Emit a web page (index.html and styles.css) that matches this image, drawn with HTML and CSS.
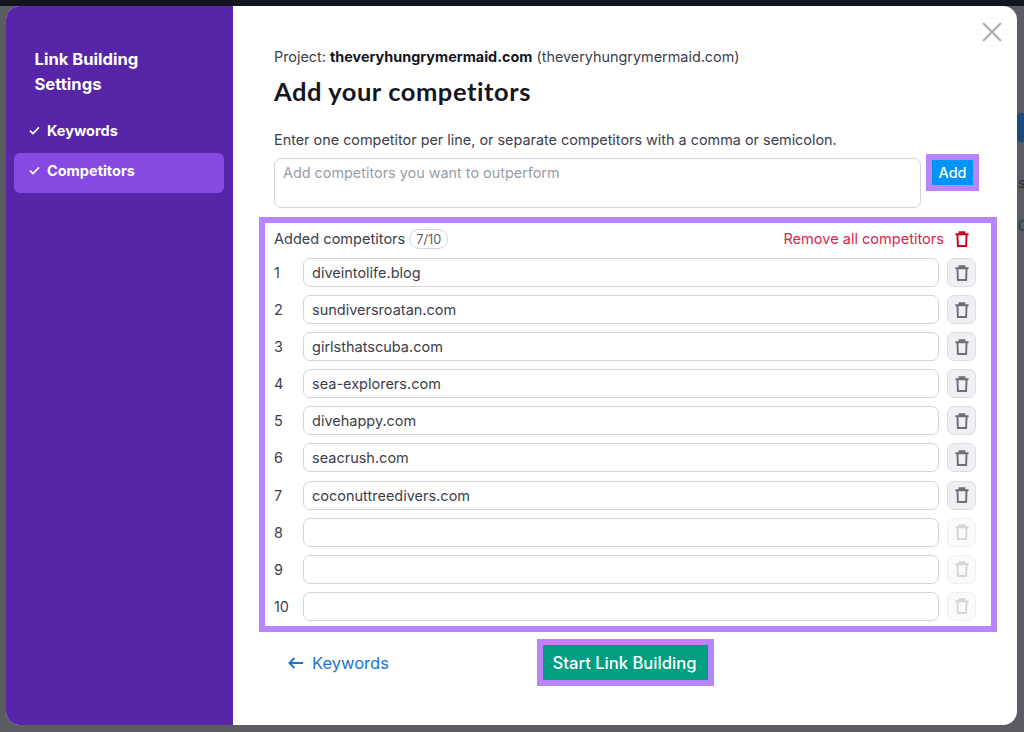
FILE: index.html
```html
<!DOCTYPE html>
<html lang="en">
<head>
<meta charset="utf-8">
<title>Link Building Settings</title>
<link rel="stylesheet" href="styles.css">
</head>
<body>
<svg class="defs" width="0" height="0" aria-hidden="true">
  <symbol id="trash" viewBox="0 0 16 18">
    <path d="M0.5 3.5h15M5.2 3.5V1.2h5.6v2.3M2.8 3.5l.5 13.4h9.4l.5-13.4" fill="none" stroke="currentColor" stroke-width="2.2"/>
  </symbol>
</svg>
<div class="topbar"></div>
<div class="bg-tab"></div>
<div class="bg-s">s</div>
<div class="bg-o">O</div>
<div class="modal">
  <aside class="sidebar">
    <h2 class="side-title">Link Building Settings</h2>
    <div class="step"><svg class="check" viewBox="0 0 12 10"><path d="M1 5.2 4.3 8.5 11 1.5" fill="none" stroke="currentColor" stroke-width="1.8"/></svg>Keywords</div>
    <div class="step step-active"><svg class="check" viewBox="0 0 12 10"><path d="M1 5.2 4.3 8.5 11 1.5" fill="none" stroke="currentColor" stroke-width="1.8"/></svg>Competitors</div>
  </aside>
  <main class="main">
    <svg class="close" viewBox="0 0 20 20"><path d="M1 1 19 19M19 1 1 19" fill="none" stroke="currentColor" stroke-width="2"/></svg>
    <p class="project">Project: <b>theveryhungrymermaid.com</b> (theveryhungrymermaid.com)</p>
    <h1 class="title">Add your competitors</h1>
    <p class="hint">Enter one competitor per line, or separate competitors with a comma or semicolon.</p>
    <div class="add-row">
      <div class="textarea">Add competitors you want to outperform</div>
      <div class="hl hl-add"><button class="btn-add">Add</button></div>
    </div>
    <section class="hl list">
      <div class="list-head">
        <span class="list-label">Added competitors</span>
        <span class="badge">7/10</span>
        <span class="remove">Remove all competitors</span>
        <svg class="remove-icon"><use href="#trash"/></svg>
      </div>
      <div class="row"><span class="num">1</span><div class="input">diveintolife.blog</div><div class="del"><svg class="del-icon"><use href="#trash"/></svg></div></div>
      <div class="row"><span class="num">2</span><div class="input">sundiversroatan.com</div><div class="del"><svg class="del-icon"><use href="#trash"/></svg></div></div>
      <div class="row"><span class="num">3</span><div class="input">girlsthatscuba.com</div><div class="del"><svg class="del-icon"><use href="#trash"/></svg></div></div>
      <div class="row"><span class="num">4</span><div class="input">sea-explorers.com</div><div class="del"><svg class="del-icon"><use href="#trash"/></svg></div></div>
      <div class="row"><span class="num">5</span><div class="input">divehappy.com</div><div class="del"><svg class="del-icon"><use href="#trash"/></svg></div></div>
      <div class="row"><span class="num">6</span><div class="input">seacrush.com</div><div class="del"><svg class="del-icon"><use href="#trash"/></svg></div></div>
      <div class="row"><span class="num">7</span><div class="input">coconuttreedivers.com</div><div class="del"><svg class="del-icon"><use href="#trash"/></svg></div></div>
      <div class="row"><span class="num">8</span><div class="input"></div><div class="del del-off"><svg class="del-icon"><use href="#trash"/></svg></div></div>
      <div class="row"><span class="num">9</span><div class="input"></div><div class="del del-off"><svg class="del-icon"><use href="#trash"/></svg></div></div>
      <div class="row"><span class="num">10</span><div class="input"></div><div class="del del-off"><svg class="del-icon"><use href="#trash"/></svg></div></div>
    </section>
    <div class="footer">
      <a class="back"><svg class="arrow" viewBox="0 0 15 12"><path d="M15 6H2M6.5 1 1.5 6l5 5" fill="none" stroke="currentColor" stroke-width="2"/></svg>Keywords</a>
      <div class="hl hl-start"><button class="btn-start">Start Link Building</button></div>
    </div>
  </main>
</div>
</body>
</html>
```
FILE: styles.css
```css
* { box-sizing: border-box; }
html, body { margin: 0; height: 732px; overflow: hidden; }
body { background: #5b5c62; font-family: Inter, "Liberation Sans", sans-serif; color: #3d404b; font-size: 14.4px; position: relative; }
.defs { position: absolute; }
.topbar { height: 6px; background: #14161f; }
.bg-tab { position: absolute; left: 1017px; top: 113px; width: 7px; height: 29px; background: #1d4a7c; border-radius: 4px 0 0 4px; }
.bg-s, .bg-o { position: absolute; left: 1018px; color: #2c2d33; font-size: 14px; line-height: 16px; }
.bg-s { top: 175px; }
.bg-o { top: 218px; color: #1d3a5c; }
.modal { display: flex; width: 1011px; height: 719px; margin-left: 6px; border-radius: 14px; overflow: hidden; background: #fff; }
.sidebar { width: 227px; flex: none; background: #5625a8; color: #fff; padding: 41px 9px 0 8px; }
.side-title { margin: 0 0 16px 20.5px; font-size: 16.6px; line-height: 25px; font-weight: 700; width: 130px; }
.step { display: flex; align-items: center; height: 40px; padding: 0 0 6px 15px; font-size: 14.5px; font-weight: 700; border-radius: 6px; }
.step-active { background: #8649e1; }
.check { width: 11px; height: 9px; margin-right: 7px; flex: none; }
.main { flex: 1; position: relative; padding: 42px 20px 0 41px; }
.close { position: absolute; right: 15px; top: 16px; width: 20px; height: 20px; color: #a8aab2; }
.project { margin: 0; line-height: 18px; }
.project b { color: #14161f; }
.title { margin: 8px 0 0; font-family: Lato, "Liberation Sans", sans-serif; font-size: 25.5px; letter-spacing: 0.55px; line-height: 34px; font-weight: 700; color: #14161f; }
.hint { margin: 23px 0 0; line-height: 18px; }
.add-row { display: flex; align-items: flex-start; margin-top: 9px; }
.textarea { width: 647px; height: 50px; padding: 5px 8px; border: 1px solid #d3d4dc; border-radius: 7px; line-height: 18px; color: #9a9ca6; }
.hl { border: 6px solid #b985ff; }
.hl-add { margin: -4px 0 0 5px; width: 53px; height: 37px; }
.btn-add { display: block; width: 41px; height: 25px; padding: 0; border: 0; background: #0095f5; color: #fff; font: 500 14.4px Inter, sans-serif; }
.list { width: 738px; height: 415px; margin: 9px 0 0 -15px; padding: 0 15px 0 9px; }
.list-head { display: flex; align-items: center; height: 29px; margin: 1px 0 5px; font-size: 14.55px; }
.list-label { line-height: 18px; }
.badge { margin-left: 4px; height: 20px; padding: 0 6px; border: 1px solid #d3d4dc; border-radius: 10px; font-size: 12.7px; line-height: 19px; color: #585b66; }
.remove { margin-left: auto; color: #d6264f; }
.remove-icon { width: 14px; height: 16px; margin: 0 7px 0 11px; color: #d1001f; }
.row { display: flex; align-items: center; height: 29px; margin-bottom: 8.1px; }
.num { width: 29px; flex: none; }
.input { width: 636px; height: 29px; padding: 0 8px; border: 1px solid #d3d4dc; border-radius: 7px; font-size: 14.5px; line-height: 27px; }
.del { display: flex; align-items: center; justify-content: center; width: 29px; height: 29px; margin-left: 8px; flex: none; background: #f0f0f4; border: 1px solid #dcdde3; border-radius: 7px; color: #6c6e79; }
.del-off { background: #fafafa; border-color: #f0f0f2; color: #d6d6d8; }
.del-icon { width: 14px; height: 16px; }
.footer { display: flex; align-items: center; margin-top: 7px; height: 47px; position: relative; }
.back { display: flex; align-items: center; margin: 1px 0 0 14px; color: #1a73d0; font-size: 16.5px; }
.arrow { width: 15px; height: 12px; margin-right: 9px; }
.hl-start { position: absolute; left: 263px; top: 0; width: 177px; height: 47px; }
.btn-start { display: block; width: 165px; height: 35px; padding: 0 2px 0 0; border: 0; background: #009f81; color: #fff; font: 500 16.6px Inter, sans-serif; }
```
